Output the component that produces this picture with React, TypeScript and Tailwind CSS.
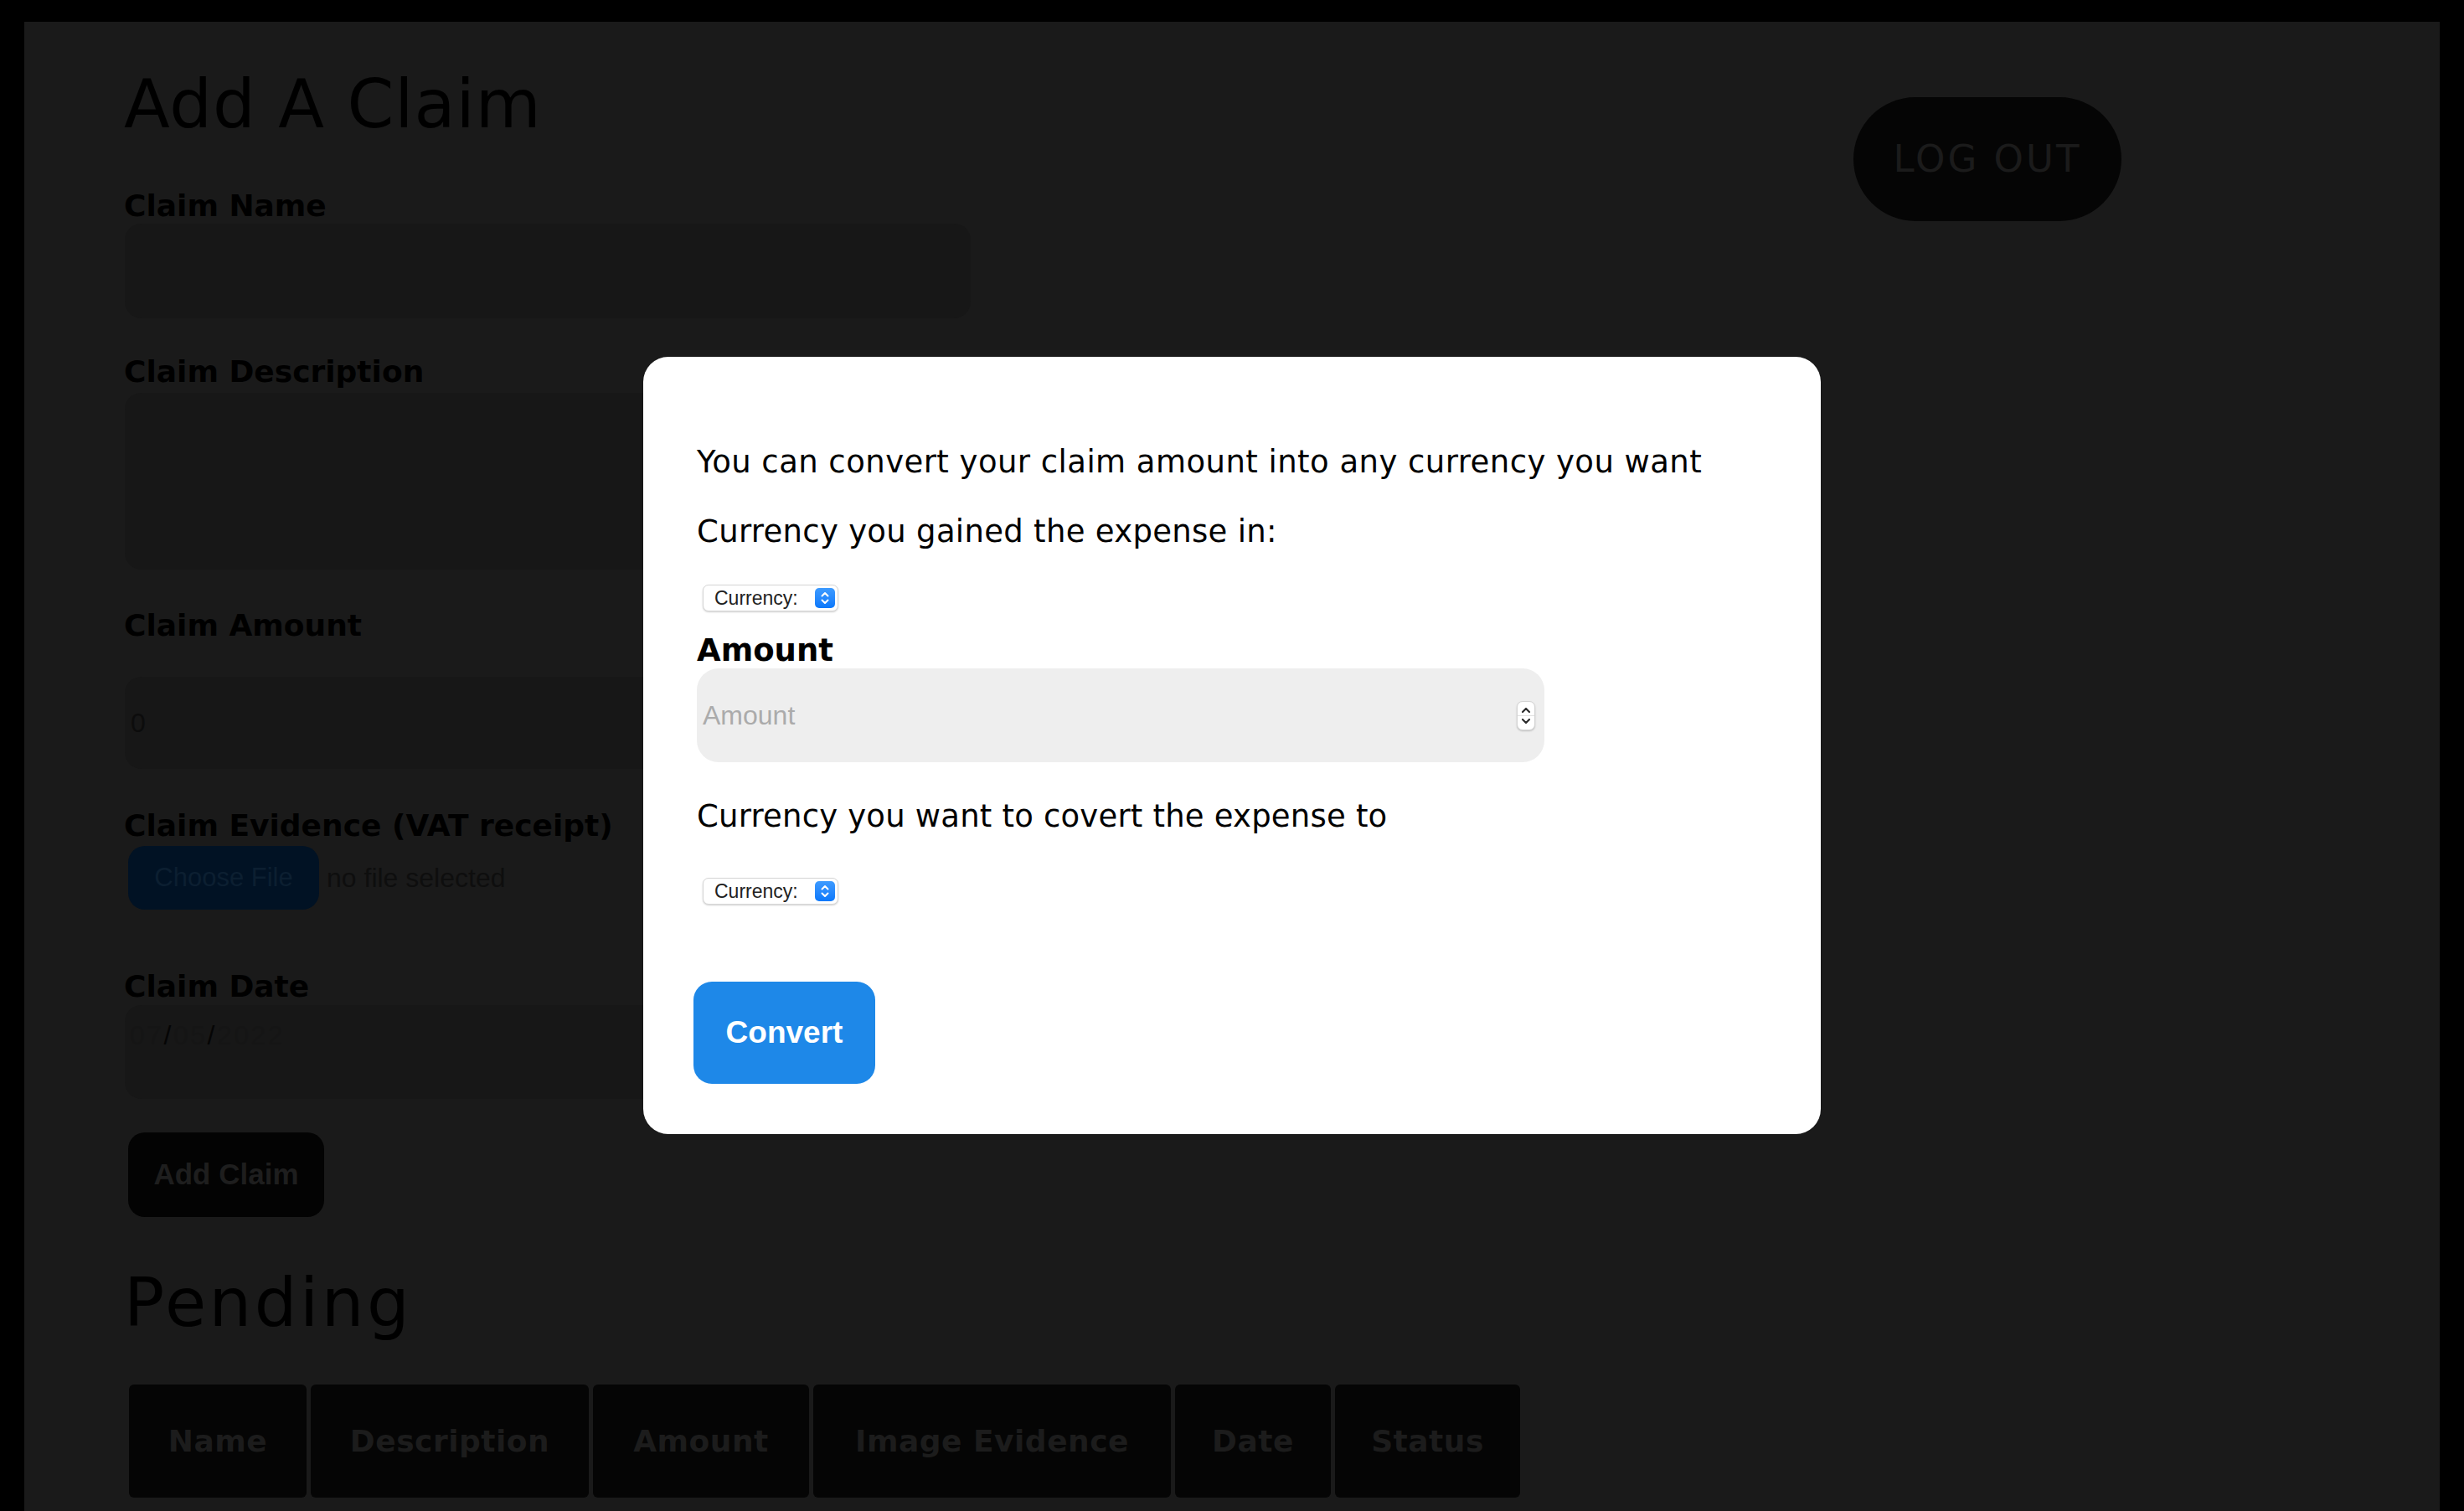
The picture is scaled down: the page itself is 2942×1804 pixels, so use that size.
import React from "react";

const dv = "font-['DejaVu_Sans',sans-serif]";
const ls = "font-['Liberation_Sans',Arial,sans-serif]";

function SelectBox() {
  return (
    <div className="flex h-[32px] w-[162px] items-center justify-between rounded-[7px] border border-[#d6d6d6] bg-white pl-[13px] pr-[3px] shadow-[0_1px_2px_rgba(0,0,0,0.18)]">
      <span className={`${ls} text-[23px] leading-none text-[#222]`}>Currency:</span>
      <span className="flex h-[24px] w-[24px] items-center justify-center rounded-[5px] bg-gradient-to-b from-[#3d9bff] to-[#0a78fb]">
        <svg width="14" height="18" viewBox="0 0 14 18" fill="none">
          <path d="M3.5 6.5L7 3l3.5 3.5" stroke="white" strokeWidth="2" strokeLinecap="round" strokeLinejoin="round" />
          <path d="M3.5 11.5L7 15l3.5-3.5" stroke="white" strokeWidth="2" strokeLinecap="round" strokeLinejoin="round" />
        </svg>
      </span>
    </div>
  );
}

function Label({ children, mt }: { children: React.ReactNode; mt: string }) {
  return <div className={`${dv} ${mt} text-[36px] font-bold leading-none text-black`}>{children}</div>;
}

export default function App() {
  const headers: [string, string][] = [
    ["Name", "w-[212px]"],
    ["Description", "w-[332px]"],
    ["Amount", "w-[258px]"],
    ["Image Evidence", "w-[427px]"],
    ["Date", "w-[186px]"],
    ["Status", "w-[221px]"],
  ];
  return (
    <div className="h-[1804px] overflow-hidden bg-black px-[29px] pt-[26px]">
      <div className="flex h-[1778px] bg-[#1a1a1a]">
        <div className="flex w-[1140px] flex-col pl-[119px] pt-[59px]">
          <h1 className={`${dv} text-[80px] font-normal leading-none tracking-[1px] text-black`}>Add A Claim</h1>

          <Label mt="mt-[63px]">Claim Name</Label>
          <div className="ml-[1px] mt-[3px] h-[113px] w-[1010px] rounded-[20px] bg-[#171717]" />

          <Label mt="mt-[46px]">Claim Description</Label>
          <div className="ml-[1px] mt-[7px] h-[211px] w-[1010px] rounded-[20px] bg-[#171717]" />

          <Label mt="mt-[49px]">Claim Amount</Label>
          <div className="ml-[1px] mt-[43px] flex h-[110px] w-[1010px] items-center rounded-[20px] bg-[#171717] pl-[7px]">
            <span className={`${ls} text-[32px] text-[#0c0c0c]`}>0</span>
          </div>

          <Label mt="mt-[50px]">Claim Evidence (VAT receipt)</Label>
          <div className="ml-[5px] mt-[6px] flex h-[76px] items-center">
            <div className={`${ls} flex h-[76px] w-[228px] items-center justify-center rounded-[20px] bg-[#011224] text-[31px] text-[#0c1f31]`}>
              Choose File
            </div>
            <span className={`${ls} ml-[9px] text-[32px] text-[#0e0e0e]`}>no file selected</span>
          </div>

          <Label mt="mt-[74px]">Claim Date</Label>
          <div className="ml-[1px] mt-[4px] flex h-[112px] w-[1010px] items-start rounded-[20px] bg-[#171717] pl-[6px] pt-[12px]">
            <span className={`${ls} text-[32px] tracking-[2.5px] text-[#151515]`}>
              07<span className="text-[#050505]">/</span>05<span className="text-[#050505]">/</span>2022
            </span>
          </div>

          <div className={`${ls} ml-[5px] mt-[40px] flex h-[101px] w-[234px] items-center justify-center rounded-[20px] bg-[#030303] text-[35px] font-bold text-[#1e1e1e]`}>
            Add Claim
          </div>

          <h2 className={`${dv} mt-[63px] text-[80px] font-normal leading-none tracking-[3.5px] text-black`}>Pending</h2>

          <div className="ml-[6px] mt-[57px] flex gap-[5px]">
            {headers.map(([h, w]) => (
              <div
                key={h}
                className={`${dv} ${w} flex h-[135px] shrink-0 items-center justify-center rounded-[6px] bg-[#050505] text-[36px] font-bold tracking-[0.5px] text-[#1c1c1c]`}
              >
                {h}
              </div>
            ))}
          </div>
        </div>

        <div className="ml-auto mr-[380px] mt-[90px]">
          <div className={`${dv} flex h-[148px] w-[320px] items-center justify-center rounded-full bg-[#050505] text-[45px] tracking-[3px] text-[#1b1b1b]`}>
            LOG OUT
          </div>
        </div>
      </div>

      <div className="fixed inset-0 flex justify-center pt-[426px]">
        <div className="flex h-[928px] w-[1406px] flex-col items-start rounded-[30px] bg-white pl-[60px] pt-[107px]">
          <p className={`${dv} ml-[4px] text-[37px] leading-none tracking-[0.45px] text-black`}>
            You can convert your claim amount into any currency you want
          </p>
          <p className={`${dv} ml-[4px] mt-[46px] text-[37px] leading-none tracking-[0.3px] text-black`}>
            Currency you gained the expense in:
          </p>
          <div className="ml-[11px] mt-[45px]">
            <SelectBox />
          </div>
          <div className={`${dv} ml-[4px] mt-[28px] text-[37px] font-bold leading-none text-black`}>Amount</div>
          <div className="relative ml-[4px] mt-[3px] flex h-[112px] w-[1012px] items-center rounded-[26px] bg-[#eeeeee] pl-[7px]">
            <span className={`${ls} text-[32px] text-[#ababab]`}>Amount</span>
            <div className="absolute right-[11px] top-[39px] flex h-[35px] w-[22px] flex-col items-center justify-center rounded-[7px] border border-[#d4d4d4] bg-white shadow-[0_1px_2px_rgba(0,0,0,0.2)]">
              <svg width="14" height="10" viewBox="0 0 14 10" fill="none">
                <path d="M3 7l4-4 4 4" stroke="#2a2a2a" strokeWidth="2.2" strokeLinecap="round" strokeLinejoin="round" />
              </svg>
              <div className="my-[1px] h-[1px] w-full bg-[#e0e0e0]" />
              <svg width="14" height="10" viewBox="0 0 14 10" fill="none">
                <path d="M3 3l4 4 4-4" stroke="#2a2a2a" strokeWidth="2.2" strokeLinecap="round" strokeLinejoin="round" />
              </svg>
            </div>
          </div>
          <p className={`${dv} ml-[4px] mt-[46px] text-[37px] leading-none tracking-[0.2px] text-black`}>
            Currency you want to covert the expense to
          </p>
          <div className="ml-[11px] mt-[55px]">
            <SelectBox />
          </div>
          <button
            className={`${ls} mt-[92px] flex h-[122px] w-[217px] items-center justify-center rounded-[22px] bg-[#1e88e8] text-[37px] font-bold text-white`}
          >
            Convert
          </button>
        </div>
      </div>
    </div>
  );
}
